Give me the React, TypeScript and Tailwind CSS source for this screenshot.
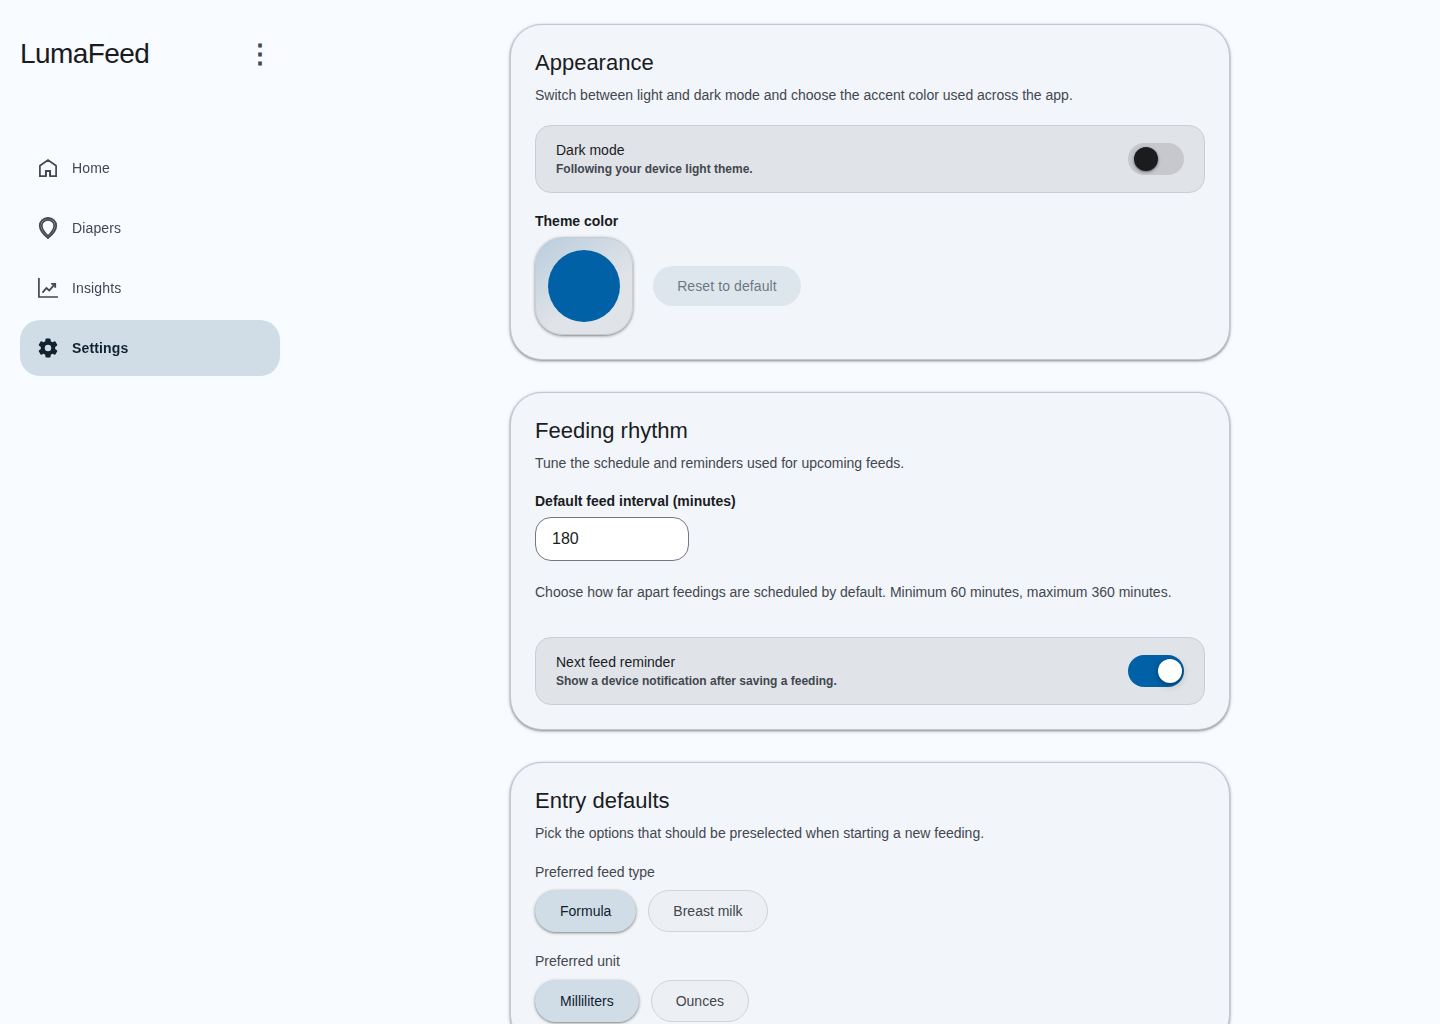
import { useState } from "react";
import type { ReactNode } from "react";

function HomeIcon() {
  return (
    <svg viewBox="0 0 24 24" className="size-6" fill="none" stroke="currentColor" strokeWidth="1.7">
      <path d="M3.900 9.700 12 4.100l8.100 5.600v10.400h-5.900v-5.300h-4.400v5.300H3.900Z" />
      <path d="M10.200 20.500v-5.200h3.600v5.200" strokeWidth="1.200" />
    </svg>
  );
}

function DiaperIcon() {
  return (
    <svg viewBox="0 0 24 24" className="size-6" fill="none" stroke="currentColor">
      <path d="M12 2C7 2 3.8 5.600 3.800 9.800c0 4.700 3.700 8.700 8.200 12.200 4.500-3.500 8.200-7.500 8.200-12.200C20.200 5.600 17 2 12 2Z" strokeWidth="1.800" />
      <path d="M12 3.900C8.300 3.900 5.800 6.600 5.800 9.800c0 3.700 2.900 7.100 6.200 10.200 3.300-3.100 6.200-6.500 6.200-10.200C18.200 6.600 15.700 3.900 12 3.900Z" strokeWidth="1.700" />
    </svg>
  );
}

function InsightsIcon() {
  return (
    <svg viewBox="0 0 24 24" className="size-6" fill="none" stroke="currentColor" strokeWidth="1.8">
      <path d="M2.900 2v19H22" strokeWidth="1.700" />
      <path d="m6.500 16.600 3.900-4.600 2.900 2.500 5.200-6.200" />
      <path d="M15.200 7.900h4v3.900" />
    </svg>
  );
}

function SettingsIcon() {
  return (
    <svg viewBox="0 0 24 24" className="size-6" fill="currentColor">
      <path d="M19.140 12.940c.040-.300.060-.610.060-.940 0-.320-.020-.640-.070-.940l2.030-1.580a.490.490 0 0 0 .120-.610l-1.920-3.320a.488.488 0 0 0-.590-.220l-2.390.960c-.500-.380-1.030-.700-1.620-.940l-.360-2.540a.484.484 0 0 0-.480-.410h-3.840c-.240 0-.430.170-.470.410l-.360 2.540c-.590.240-1.130.570-1.620.940l-2.390-.960c-.220-.080-.470 0-.590.220L2.740 8.870c-.120.210-.080.470.120.610l2.030 1.580c-.050.300-.090.630-.090.940s.020.640.070.940l-2.030 1.580a.490.490 0 0 0-.120.610l1.920 3.320c.120.220.370.290.590.220l2.390-.960c.500.380 1.030.700 1.620.940l.360 2.540c.050.240.240.410.480.410h3.840c.240 0 .440-.170.470-.410l.360-2.540c.590-.240 1.130-.560 1.620-.940l2.390.960c.220.080.470 0 .590-.220l1.920-3.320c.120-.220.070-.470-.120-.610l-2.010-1.580zM12 15.200a3.200 3.200 0 1 1 0-6.400 3.200 3.200 0 0 1 0 6.400z" />
    </svg>
  );
}

const navItems = [
  { label: "Home", icon: <HomeIcon /> },
  { label: "Diapers", icon: <DiaperIcon /> },
  { label: "Insights", icon: <InsightsIcon /> },
  { label: "Settings", icon: <SettingsIcon />, active: true },
];

function Sidebar() {
  return (
    <aside className="flex w-[300px] shrink-0 flex-col px-5 pt-6">
      <div className="flex h-[60px] items-center justify-between">
        <span className="text-[28px] leading-9 tracking-[-0.02em]">LumaFeed</span>
        <button className="flex size-10 items-center justify-center text-[26px] leading-none font-bold text-[#43474e]" aria-label="Menu">
          ⋮
        </button>
      </div>
      <nav className="mt-14 flex flex-col gap-1">
        {navItems.map((item) => (
          <a
            key={item.label}
            className={
              item.active
                ? "flex h-14 items-center gap-3 rounded-[20px] bg-[#d1dde6] px-4 text-sm font-bold tracking-[0.01em] text-[#102230] will-change-transform"
                : "flex h-14 items-center gap-3 rounded-[20px] px-4 text-sm tracking-[0.01em] text-[#43474e] will-change-transform"
            }
          >
            {item.icon}
            {item.label}
          </a>
        ))}
      </nav>
    </aside>
  );
}

function Card({ title, description, children }: { title: string; description: string; children: ReactNode }) {
  return (
    <section className="w-[720px] rounded-[32px] border border-[#c3c7cf] bg-[#f2f5fa] p-6 shadow-[0_1px_2px_rgba(0,0,0,0.3),0_1px_3px_1px_rgba(0,0,0,0.15)]">
      <h2 className="text-[22px] leading-7">{title}</h2>
      <p className="mt-2 text-sm leading-5 text-[#43474e]">{description}</p>
      {children}
    </section>
  );
}

function ToggleRow({ title, detail, initial }: { title: string; detail: string; initial: boolean }) {
  const [on, setOn] = useState(initial);
  return (
    <div className="flex h-[68px] items-center justify-between rounded-2xl border border-[#cbced4] bg-[#e0e3e8] px-5">
      <div>
        <div className="text-sm leading-5">{title}</div>
        <div className="text-xs leading-[18px] font-bold text-[#43474e]">{detail}</div>
      </div>
      <button
        role="switch"
        aria-checked={on}
        aria-label={title}
        onClick={() => setOn(!on)}
        className={
          on
            ? "flex h-8 w-14 items-center rounded-full bg-[#0061a6] pl-[30px]"
            : "flex h-8 w-14 items-center rounded-full bg-[#c7c8cd] pl-1.5"
        }
      >
        <span
          className={
            on
              ? "size-6 rounded-full bg-white shadow-[0_1px_2px_rgba(0,0,0,0.3),0_2px_6px_2px_rgba(0,0,0,0.15)]"
              : "size-6 rounded-full bg-[#1a1c1e] shadow-[0_1px_2px_rgba(0,0,0,0.3),0_1px_3px_1px_rgba(0,0,0,0.15)]"
          }
        />
      </button>
    </div>
  );
}

function ChipGroup({ options }: { options: string[] }) {
  const [selected, setSelected] = useState(options[0]);
  return (
    <div className="flex gap-3">
      {options.map((option) => (
        <button
          key={option}
          onClick={() => setSelected(option)}
          className={
            option === selected
              ? "h-[42px] rounded-[21px] border border-transparent bg-[#d1dde6] bg-clip-border px-6 text-sm text-[#102230] shadow-[0_1px_2px_rgba(0,0,0,0.3),0_1px_3px_1px_rgba(0,0,0,0.15)]"
              : "h-[42px] rounded-[21px] border border-[#d0d3d8] bg-[#eceff3] px-6 text-sm text-[#43474e]"
          }
        >
          {option}
        </button>
      ))}
    </div>
  );
}

export default function App() {
  return (
    <div className="flex h-screen overflow-hidden bg-[#f8fbff] font-['Liberation_Sans',sans-serif] text-[#1a1c1e]">
      <Sidebar />
      <main className="flex flex-1 flex-col items-center gap-8 pt-6 *:shrink-0">
        <Card title="Appearance" description="Switch between light and dark mode and choose the accent color used across the app.">
          <div className="mt-5">
            <ToggleRow title="Dark mode" detail="Following your device light theme." initial={false} />
          </div>
          <div className="mt-[18px] text-sm leading-5 font-bold">Theme color</div>
          <div className="mt-1.5 flex items-center gap-5">
            <button
              aria-label="Theme color"
              className="flex size-[98px] items-center justify-center rounded-[28px] border border-[#c9ccd1] bg-[linear-gradient(145deg,#b9cddd_0%,#e0e3e8_60%)] shadow-[0_1px_2px_rgba(0,0,0,0.3),0_1px_3px_1px_rgba(0,0,0,0.15)]"
            >
              <span className="size-[72px] rounded-full bg-[#0061a6]" />
            </button>
            <button className="h-10 w-[148px] rounded-full bg-[#d1dde6] text-sm tracking-[0.1px] text-[#102230] opacity-60">
              Reset to default
            </button>
          </div>
        </Card>

        <Card title="Feeding rhythm" description="Tune the schedule and reminders used for upcoming feeds.">
          <div className="mt-[18px] text-sm leading-5 font-bold">Default feed interval (minutes)</div>
          <input
            defaultValue="180"
            aria-label="Default feed interval (minutes)"
            className="mt-1.5 block h-11 w-[154px] rounded-2xl border border-[#73777f] bg-white px-4 text-base"
          />
          <p className="mt-[21px] text-sm leading-5 text-[#43474e]">
            Choose how far apart feedings are scheduled by default. Minimum 60 minutes, maximum 360 minutes.
          </p>
          <div className="mt-[35px]">
            <ToggleRow title="Next feed reminder" detail="Show a device notification after saving a feeding." initial={true} />
          </div>
        </Card>

        <Card title="Entry defaults" description="Pick the options that should be preselected when starting a new feeding.">
          <div className="mt-[19px] mb-2 text-sm leading-5 text-[#43474e]">Preferred feed type</div>
          <ChipGroup options={["Formula", "Breast milk"]} />
          <div className="mt-[19px] mb-[9px] text-sm leading-5 text-[#43474e]">Preferred unit</div>
          <ChipGroup options={["Milliliters", "Ounces"]} />
        </Card>
      </main>
    </div>
  );
}
